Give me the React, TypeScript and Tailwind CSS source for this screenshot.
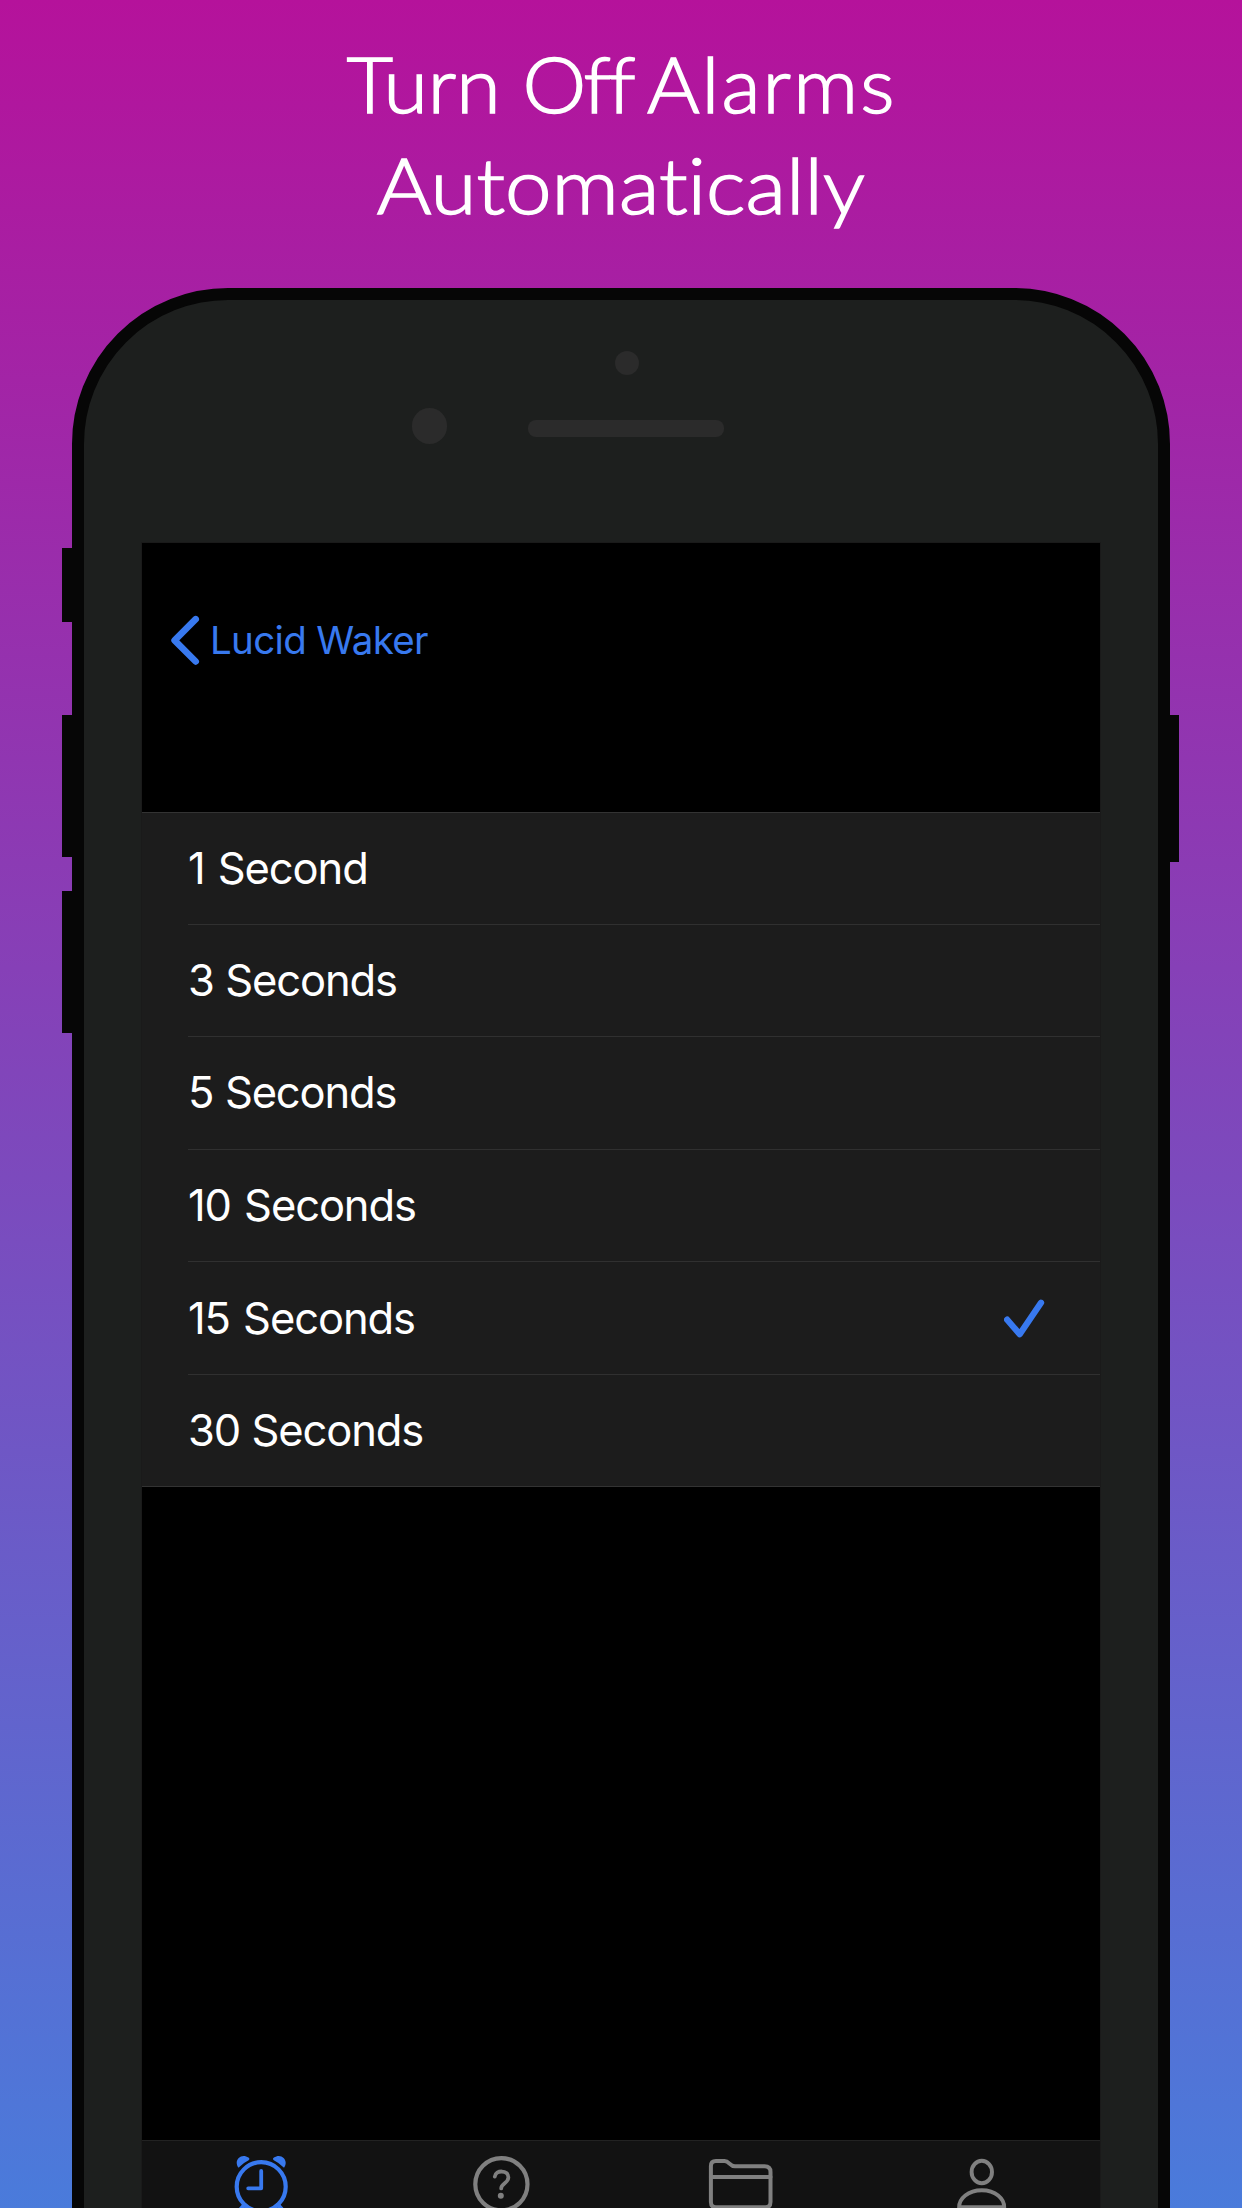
import React from 'react';

const OPTIONS = ['1 Second', '3 Seconds', '5 Seconds', '10 Seconds', '15 Seconds', '30 Seconds'];
const SELECTED = '15 Seconds';

function AlarmIcon() {
  return (
    <svg width="60" height="60" viewBox="0 0 60 60" fill="none" stroke="#3879ef" strokeWidth="4.2" strokeLinecap="round" strokeLinejoin="round">
      <circle cx="30.2" cy="32.7" r="24.5" />
      <path d="M30.2 17V34.3H17.2" strokeWidth="3.8" />
      <path d="M7 13.2C2.5 6 10.5-1.5 17.5 3.6Q19.3 5 17.6 6.2Q12 9 8.6 12.8Q7.8 13.8 7 13.2Z" fill="#3879ef" stroke="none" />
      <path d="M53.4 13.2C57.9 6 49.9-1.5 42.9 3.6Q41.1 5 42.8 6.2Q48.4 9 51.8 12.8Q52.6 13.8 53.4 13.2Z" fill="#3879ef" stroke="none" />
      <path d="M13.5 51l-3.6 4M46.9 51l3.6 4" />
    </svg>
  );
}

function HelpIcon() {
  return (
    <svg width="60" height="60" viewBox="0 0 60 60" fill="none" stroke="#808080" strokeWidth="4.2" strokeLinecap="round" strokeLinejoin="round">
      <circle cx="30.4" cy="30.2" r="26.1" />
      <path d="M23.8 22.6C24.6 15.6 37.4 15.8 37.4 23.4C37.4 29 30.2 29.2 30.2 34.4" strokeWidth="3.8" />
      <circle cx="29.8" cy="41.7" r="3" fill="#808080" stroke="none" />
    </svg>
  );
}

function FolderIcon() {
  return (
    <svg width="66" height="60" viewBox="0 0 66 60" fill="none" stroke="#808080" strokeWidth="4" strokeLinecap="round" strokeLinejoin="round">
      <path d="M3.9 48V12Q3.9 7 8.9 7H17.5C22.5 7 22.5 12.3 28 12.3H57.5Q63.5 12.3 63.5 18V48Q63.5 53.3 58.5 53.3H8.9Q3.9 53.3 3.9 48Z" />
      <path d="M3.9 23H63.5" />
    </svg>
  );
}

function PersonIcon() {
  return (
    <svg width="60" height="60" viewBox="0 0 60 60" fill="none" stroke="#808080" strokeWidth="3.9" strokeLinecap="round" strokeLinejoin="round">
      <ellipse cx="30.8" cy="18" rx="10.2" ry="11.2" />
      <path d="M8.1 53.2C8.1 44.5 17 36.2 30.8 36.2S53.2 44.5 53.2 53.2Z" />
    </svg>
  );
}

export default function App() {
  return (
    <main className="relative flex h-[2208px] w-[1242px] flex-col items-center overflow-hidden bg-linear-to-b/srgb from-[#b5129b] to-[#4a7bdb]">
      <h1 className="flex h-[288px] w-full shrink-0 flex-col items-center pt-[33px] font-['Lato',sans-serif] text-[76px] leading-[101px] font-light whitespace-nowrap text-white [-webkit-text-stroke:1.5px_white]">
        <span className="scale-x-[1.06]">
          Turn <span className="tracking-[-2.5px]">Off</span>
          <span className="[word-spacing:-7px] tracking-[2px]"> Alarms</span>
        </span>
        <span className="scale-x-[1.1] [font-variant-ligatures:none]">Automatically</span>
      </h1>

      <section className="relative h-[1920px] w-full shrink-0">
        <i className="absolute top-[260px] left-[62px] h-[74px] w-4 bg-[#060606]" />
        <i className="absolute top-[427px] left-[62px] h-[142px] w-4 bg-[#060606]" />
        <i className="absolute top-[603px] left-[62px] h-[142px] w-4 bg-[#060606]" />
        <i className="absolute top-[427px] left-[1162px] h-[147px] w-[16.5px] bg-[#060606]" />

        <div className="relative ml-[72px] flex h-[2100px] w-[1098px] flex-col items-center rounded-t-[156px] border-[12px] border-[#060606] bg-[#1d1f1e]">
          <div className="relative h-[243px] w-full shrink-0">
            <i className="absolute top-[51px] left-[530.5px] size-[24px] rounded-full bg-[#2b2b2b]" />
            <i className="absolute top-[108px] left-[327.5px] size-[35.5px] rounded-full bg-[#2b2b2b]" />
            <i className="absolute top-[120px] left-[444px] h-[17px] w-[196px] rounded-[8px] bg-[#2b2b2b]" />
          </div>

          <div className="flex w-[958px] flex-1 flex-col bg-black outline-1 outline-[#1a1a1a]">
            <header className="flex h-[269px] shrink-0 items-start pt-[72px] pl-[27px] text-[#3879ef]">
              <svg width="32" height="50" viewBox="0 0 32 50" fill="none" stroke="currentColor" strokeWidth="6.6" strokeLinecap="round" strokeLinejoin="round">
                <path d="M26.7 4.2L5.6 25.3L26.7 46.5" />
              </svg>
              <span className="ml-[9px] font-['Inter',sans-serif] text-[38.5px] leading-[50px] tracking-[-0.65px] whitespace-nowrap">Lucid Waker</span>
            </header>

            <ul className="flex h-[675px] shrink-0 flex-col border-y border-[#333333] bg-[#1c1c1c]">
              {OPTIONS.map((label, i) => (
                <li
                  key={label}
                  className={
                    i === 0
                      ? 'ml-[46px] flex h-[111px] shrink-0 items-center justify-between pr-[54px] pb-[2px]'
                      : i < 3
                        ? 'ml-[46px] flex h-[112.4px] shrink-0 items-center justify-between border-t border-[#303030] pr-[54px] pb-[2px]'
                        : 'ml-[46px] flex h-[112.4px] shrink-0 items-center justify-between border-t border-[#303030] pr-[54px]'
                  }
                >
                  <span
                    className={
                      label.startsWith('1')
                        ? "font-['Inter',sans-serif] text-[43.5px] leading-[56px] tracking-[-1.1px] [word-spacing:2px] whitespace-nowrap text-white"
                        : "font-['Inter',sans-serif] text-[43.5px] leading-[56px] tracking-[-1.15px] [word-spacing:0.5px] whitespace-nowrap text-white"
                    }
                  >
                    {label}
                  </span>
                  {label === SELECTED && (
                    <svg width="42" height="42" viewBox="0 0 42 42" fill="none" stroke="#3879ef" strokeWidth="6.3" strokeLinecap="round" strokeLinejoin="round">
                      <path d="M3.2 22.7L15.7 37.2L37 5.7" />
                    </svg>
                  )}
                </li>
              ))}
            </ul>

            <div className="h-[653px] shrink-0" />

            <nav className="flex h-[130px] shrink-0 border-t border-[#222222] bg-[#121212] pt-[13px]">
              <div className="flex w-[238px] justify-center"><AlarmIcon /></div>
              <div className="flex w-[242px] justify-center"><HelpIcon /></div>
              <div className="flex w-[236px] justify-center"><FolderIcon /></div>
              <div className="flex w-[242px] justify-center pl-[4px]"><PersonIcon /></div>
            </nav>
          </div>
        </div>
      </section>
    </main>
  );
}
